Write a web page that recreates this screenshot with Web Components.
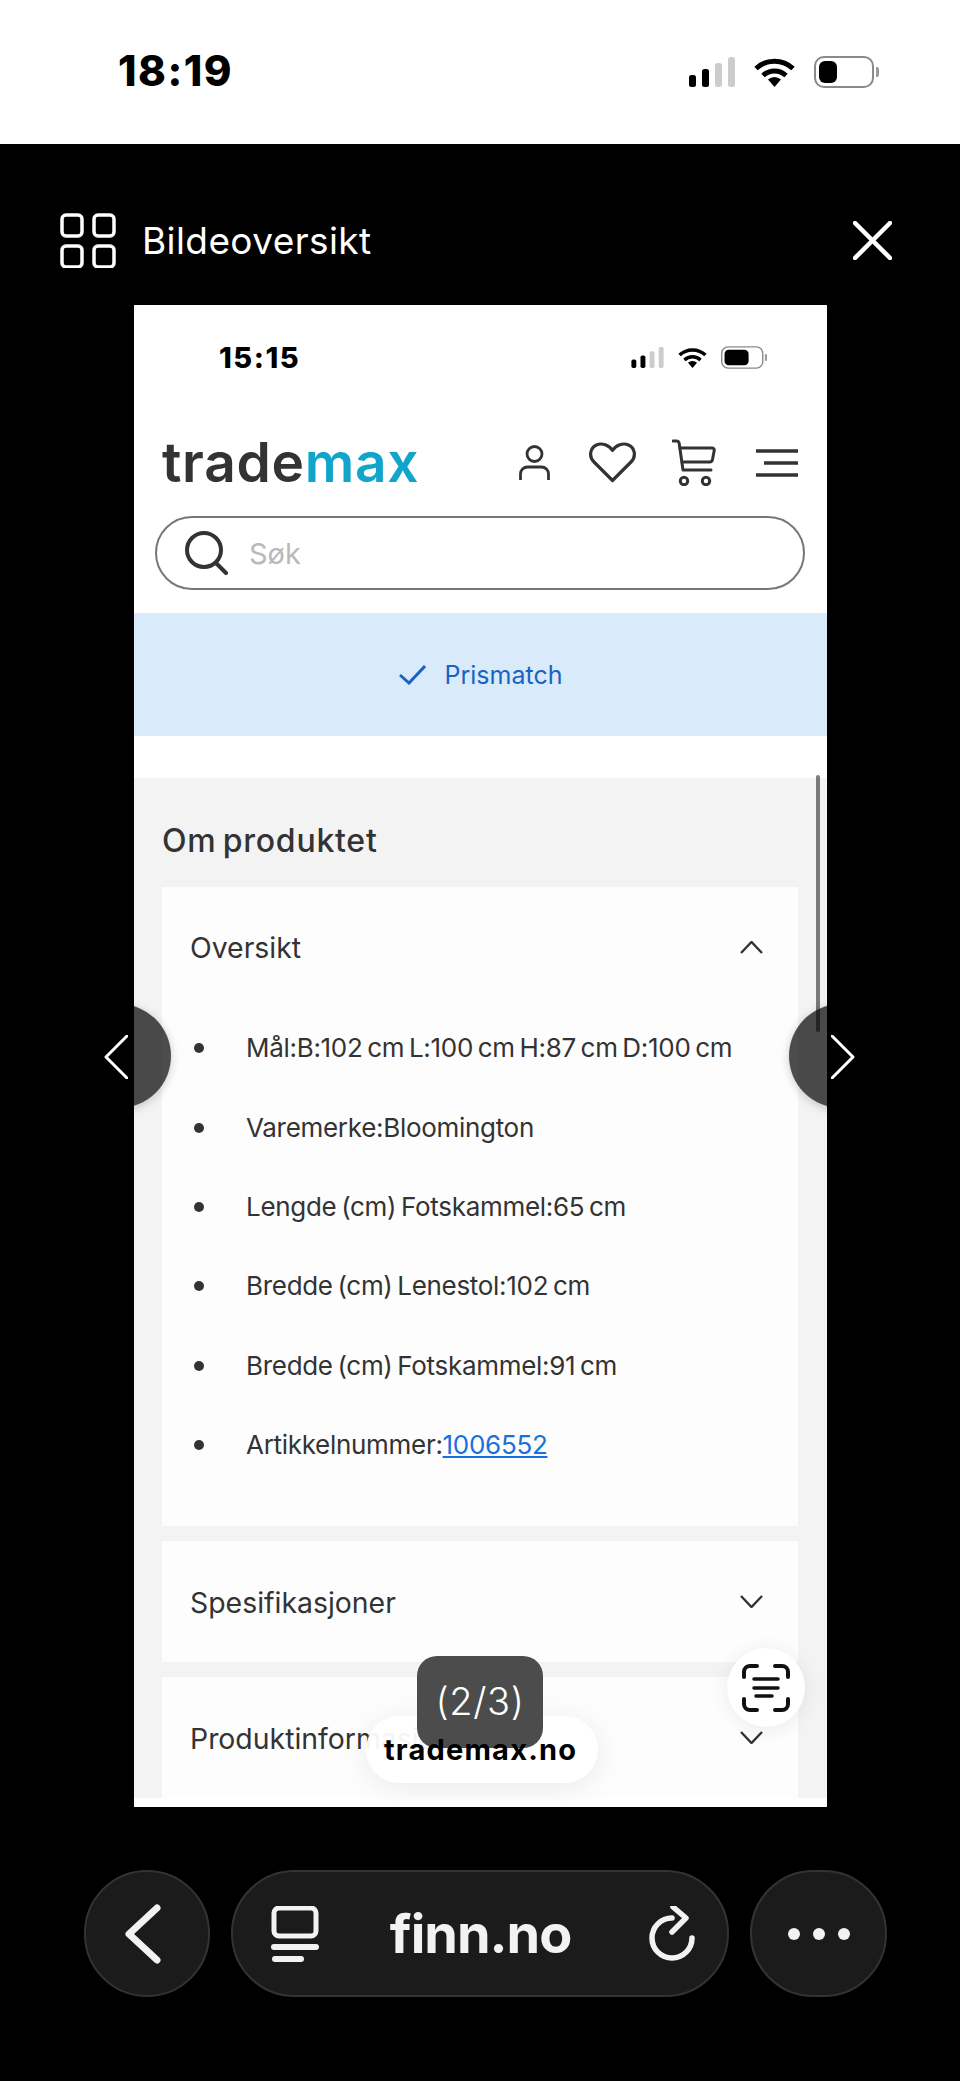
<!DOCTYPE html>
<html lang="no">
<head>
<meta charset="utf-8">
<title>Bildeoversikt</title>
<style>
  html, body { margin: 0; background: #000; }
  body { width: 960px; height: 2081px; overflow: hidden; position: relative; font-family: Inter, "Liberation Sans", sans-serif; }
</style>
</head>
<body>
<phone-status></phone-status>
<viewer-header>Bildeoversikt</viewer-header>

<shot-frame>
  <inner-status></inner-status>
  <shop-header></shop-header>
  <search-box>Søk</search-box>
  <info-band>Prismatch</info-band>
  <product-section heading="Om produktet">
    <accordion-card heading="Oversikt" open>
      <spec-item>Mål:B:102 cm L:100 cm H:87 cm D:100 cm</spec-item>
      <spec-item>Varemerke:Bloomington</spec-item>
      <spec-item>Lengde (cm) Fotskammel:65 cm</spec-item>
      <spec-item>Bredde (cm) Lenestol:102 cm</spec-item>
      <spec-item>Bredde (cm) Fotskammel:91 cm</spec-item>
      <spec-item>Artikkelnummer:<a href="#1006552">1006552</a></spec-item>
    </accordion-card>
    <accordion-card heading="Spesifikasjoner"></accordion-card>
    <accordion-card heading="Produktinformasjon"></accordion-card>
  </product-section>
</shot-frame>

<viewer-arrow side="left"></viewer-arrow>
<viewer-arrow side="right"></viewer-arrow>
<source-pill></source-pill>
<page-toast>(2/3)</page-toast>
<source-label>trademax.no</source-label>
<scan-button></scan-button>
<bottom-bar>finn.no</bottom-bar>

<script>
// small helper, every element is the same: open shadow root + html string
class Base extends HTMLElement {
  connectedCallback() {
    if (!this.shadowRoot) this.attachShadow({ mode: 'open' });
    this.shadowRoot.innerHTML = this.render();
  }
}

function signalIcon(w, h) {
  return `<svg width="${w}" height="${h}" viewBox="0 0 46 30">
    <rect x="0" y="18" width="7" height="12" rx="2.5" fill="#000"/>
    <rect x="13" y="12" width="7" height="18" rx="2.5" fill="#000"/>
    <rect x="26" y="6" width="7" height="24" rx="2.5" fill="#ccc"/>
    <rect x="39" y="0" width="7" height="30" rx="2.5" fill="#ccc"/>
  </svg>`;
}

function wifiIcon(w, h) {
  return `<svg width="${w}" height="${h}" viewBox="0 0 41 30" fill="none" stroke="#000" stroke-width="5">
    <path d="M2 11.5a27 27 0 0 1 37 0"/>
    <path d="M9 18.5a17 17 0 0 1 23 0"/>
    <path d="M14 22.5a9.500 9.500 0 0 1 13 0L20.500 30z" fill="#000" stroke="none"/>
  </svg>`;
}

function batteryIcon(w, h, fillW, rx) {
  return `<svg width="${w}" height="${h}" viewBox="0 0 65 32" fill="none">
    <rect x="1" y="1" width="58" height="30" rx="${rx}" stroke="#8a8a8a" stroke-width="2"/>
    <rect x="5" y="5" width="${fillW}" height="22" rx="${rx - 3}" fill="#000"/>
    <path d="M62 11a5 5 0 0 1 0 10z" fill="#999"/>
  </svg>`;
}

customElements.define('phone-status', class extends Base {
  render() {
    return `<style>
      :host { display: flex; align-items: center; height: 144px; background: #fff; padding: 0 81px 0 118px; box-sizing: border-box; }
      .time { font: 800 42px/1 Inter, "Liberation Sans", sans-serif; color: #000; letter-spacing: 1.5px; margin-right: auto; position: relative; top: -1px; }
      .icons { display: flex; align-items: center; gap: 19px; margin-top: -1px; }
    </style>
    <span class="time">18:19</span>
    <span class="icons">${signalIcon(46, 30)}${wifiIcon(41, 30)}${batteryIcon(65, 32, 18, 9)}</span>`;
  }
});

customElements.define('viewer-header', class extends Base {
  render() {
    return `<style>
      :host { display: flex; align-items: center; height: 161px; padding: 32px 68px 0 60px; box-sizing: border-box; color: #fff; }
      .title { font: 400 37px/1 Inter, "Liberation Sans", sans-serif; letter-spacing: .4px; margin-left: 26px; margin-right: auto; }
    </style>
    <svg width="56" height="55" viewBox="0 0 56 55" fill="none" stroke="#fff" stroke-width="3.500">
      <rect x="2" y="2" width="20" height="21" rx="4"/><rect x="34" y="2" width="20" height="21" rx="4"/>
      <rect x="2" y="33" width="20" height="21" rx="4"/><rect x="34" y="33" width="20" height="21" rx="4"/>
    </svg>
    <span class="title"><slot></slot></span>
    <svg width="39" height="39" viewBox="0 0 39 39" stroke="#fff" stroke-width="4.500" stroke-linecap="round">
      <path d="M2 2l35 35M37 2L2 37"/>
    </svg>`;
  }
});

customElements.define('shot-frame', class extends Base {
  render() {
    return `<style>
      :host { display: block; width: 693px; height: 1502px; margin-left: 134px; background: #fff; overflow: hidden; position: relative; }
      .thumb { position: absolute; right: 7px; top: 470px; width: 4px; height: 257px; border-radius: 2px; background: rgba(0,0,0,.5); }
    </style>
    <slot></slot><div class="thumb"></div>`;
  }
});

customElements.define('inner-status', class extends Base {
  render() {
    return `<style>
      :host { display: flex; align-items: center; height: 104px; padding: 0 60px 0 85px; box-sizing: border-box; }
      .time { font: 800 29px/1 Inter, "Liberation Sans", sans-serif; color: #000; letter-spacing: 1.5px; margin-right: auto; }
      .icons { display: flex; align-items: center; gap: 14px; }
    </style>
    <span class="time">15:15</span>
    <span class="icons">${signalIcon(33, 21)}${wifiIcon(29, 21)}${batteryIcon(46, 23, 34, 9)}</span>`;
  }
});

customElements.define('shop-header', class extends Base {
  render() {
    return `<style>
      :host { display: flex; align-items: center; height: 107px; padding: 0 29px 0 28px; box-sizing: border-box; }
      .logo { font: 600 55px/1 Inter, "Liberation Sans", sans-serif; color: #333; letter-spacing: .7px; margin-right: auto; }
      .logo b { font-weight: 600; color: #12a5cb; }
      svg { display: block; fill: none; stroke: #333; }
    </style>
    <span class="logo">trade<b>max</b></span>
    <svg width="31" height="36" viewBox="0 0 31 36" stroke-width="2.800">
      <circle cx="15.500" cy="9" r="7.500"/>
      <path d="M1.500 35v-6a7 7 0 0 1 7-7h14a7 7 0 0 1 7 7v6"/>
    </svg>
    <svg width="47" height="41" viewBox="0 0 47 41" stroke-width="3.200" stroke-linejoin="round" style="margin-left:39px">
      <path d="M23.500 38.500L5 20C-.5 14.500 1 6 7.500 3 13 .5 20 3 23.500 8.500 27 3 34 .5 39.500 3 46 6 47.500 14.500 42 20z"/>
    </svg>
    <svg width="44" height="47" viewBox="0 0 44 47" stroke-width="3" stroke-linecap="round" stroke-linejoin="round" style="margin-left:36px">
      <path d="M1 2h3.500c1.500 0 2.500 1 2.700 2.500L11 31h28"/>
      <path d="M8 9h32c1.500 0 2.500 1 2.200 2.500l-1.700 9c-.3 1.500-1.200 2.500-2.700 2.500H10"/>
      <circle cx="12" cy="42" r="3.700"/><circle cx="34" cy="42" r="3.700"/>
    </svg>
    <svg width="42" height="28" viewBox="0 0 42 28" stroke-width="3.600" style="margin-left:40px">
      <path d="M0 2h42M8 14h34M0 26h42"/>
    </svg>`;
  }
});

customElements.define('search-box', class extends Base {
  render() {
    return `<style>
      :host { display: flex; align-items: center; height: 74px; margin: 0 22px 23px 21px; padding-left: 28px; box-sizing: border-box; border: 2px solid #777; border-radius: 37px; }
      span { font: 400 29px/1 Inter, "Liberation Sans", sans-serif; color: #b9b9b9; margin-left: 21px; }
    </style>
    <svg width="43" height="44" viewBox="0 0 43 44" fill="none" stroke="#333" stroke-width="4" stroke-linecap="round">
      <circle cx="19" cy="19" r="17"/><path d="M31 32l10 10"/>
    </svg>
    <span><slot></slot></span>`;
  }
});

customElements.define('info-band', class extends Base {
  render() {
    return `<style>
      :host { display: flex; align-items: center; justify-content: center; gap: 19px; height: 123px; margin-bottom: 42px; background: #d9eafa; color: #1a63c2; font: 400 25px/1 Inter, "Liberation Sans", sans-serif; }
      span { position: relative; top: 1px; }
    </style>
    <svg width="27" height="20" viewBox="0 0 27 20" fill="none" stroke="#1a63c2" stroke-width="3">
      <path d="M1 10l9 8L26 1"/>
    </svg>
    <span><slot></slot></span>`;
  }
});

customElements.define('product-section', class extends Base {
  render() {
    return `<style>
      :host { display: block; background: #f3f3f3; padding: 43px 29px 0 28px; }
      h2 { margin: 0 0 26px; font: 500 32px/40px Inter, "Liberation Sans", sans-serif; color: #333; letter-spacing: .75px; word-spacing: -3px; }
      .cards { display: flex; flex-direction: column; gap: 15px; }
    </style>
    <h2>${this.getAttribute('heading')}</h2>
    <div class="cards"><slot></slot></div>`;
  }
});

customElements.define('accordion-card', class extends Base {
  render() {
    const open = this.hasAttribute('open');
    const chev = open ? 'M1 12L11.500 1 22 12' : 'M1 1l10.500 11L22 1';
    return `<style>
      :host { display: block; background: #fdfdfd; padding-bottom: ${open ? 42 : 0}px; }
      .head { display: flex; align-items: center; justify-content: space-between; height: 121px; padding: 0 35px 0 28px; box-sizing: border-box; font: 400 28.400px/1 Inter, "Liberation Sans", sans-serif; color: #333; }
      .head span { position: relative; top: 1px; }
      svg { display: block; }
    </style>
    <div class="head"><span>${this.getAttribute('heading')}</span>
      <svg width="23" height="13" viewBox="0 0 23 13" fill="none" stroke="#333" stroke-width="2.400"><path d="${chev}"/></svg>
    </div>
    <slot></slot>`;
  }
});

customElements.define('spec-item', class extends Base {
  render() {
    return `<style>
      :host { display: flex; align-items: center; height: 79.400px; padding: 1px 0 0 32px; box-sizing: border-box; font: 400 26px/1 Inter, "Liberation Sans", sans-serif; color: #333; letter-spacing: -.3px; word-spacing: -2.300px; }
      i { flex: none; width: 10px; height: 10px; border-radius: 50%; background: #333; margin-right: 42px; }
      ::slotted(a) { color: #1a6fe0; text-decoration: underline; }
    </style>
    <i></i><span><slot></slot></span>`;
  }
});

customElements.define('viewer-arrow', class extends Base {
  render() {
    const left = this.getAttribute('side') === 'left';
    return `<style>
      :host { position: absolute; top: 1004px; left: ${left ? 67 : 789}px; width: 104px; height: 104px; border-radius: 50%; background: rgba(0,0,0,.7); box-shadow: 0 2px 10px rgba(0,0,0,.2); }
      svg { position: absolute; top: 31px; left: ${left ? 37 : 42}px; }
    </style>
    <svg width="24" height="44" viewBox="0 0 24 44" fill="none" stroke="#fff" stroke-width="3" stroke-linecap="round" stroke-linejoin="round">
      <path d="${left ? 'M23 1L2 22l21 21' : 'M1 1l21 21L1 43'}"/>
    </svg>`;
  }
});

customElements.define('source-pill', class extends Base {
  render() {
    return `<style>
      :host { position: absolute; left: 366px; top: 1716px; width: 232px; height: 67px; border-radius: 34px; background: rgba(255,255,255,.95); box-shadow: 0 4px 30px rgba(0,0,0,.08); }
    </style>`;
  }
});

customElements.define('page-toast', class extends Base {
  render() {
    return `<style>
      :host { position: absolute; left: 417px; top: 1656px; width: 126px; height: 92px; border-radius: 20px; background: #4c4c4c; color: #fff; display: flex; align-items: center; justify-content: center; font: 300 38px/1 Inter, "Liberation Sans", sans-serif; letter-spacing: .6px; padding-bottom: 2px; box-sizing: border-box; }
    </style><slot></slot>`;
  }
});

customElements.define('source-label', class extends Base {
  render() {
    return `<style>
      :host { position: absolute; left: 384px; top: 1732px; font: 700 29px/36px Inter, "Liberation Sans", sans-serif; letter-spacing: 1.200px; color: #000; }
    </style><slot></slot>`;
  }
});

customElements.define('scan-button', class extends Base {
  render() {
    return `<style>
      :host { position: absolute; left: 727px; top: 1648px; width: 78px; height: 79px; border-radius: 50%; background: #fff; box-shadow: 0 2px 20px rgba(0,0,0,.08); display: flex; align-items: center; justify-content: center; }
    </style>
    <svg width="48" height="48" viewBox="0 0 48 48" fill="none" stroke="#111" stroke-width="4" stroke-linecap="round">
      <path d="M2 13V8a6 6 0 0 1 6-6h7M33 2h7a6 6 0 0 1 6 6v5M2 35v5a6 6 0 0 0 6 6h7M33 46h7a6 6 0 0 0 6-6v-5"/>
      <path d="M12 15h24M12 24h24M14 32h16" stroke-width="3.500"/>
    </svg>`;
  }
});

customElements.define('bottom-bar', class extends Base {
  render() {
    return `<style>
      :host { position: absolute; left: 84px; top: 1870px; width: 803px; height: 127px; display: flex; gap: 21px; color: #f2f2f2; }
      .btn { box-sizing: border-box; height: 127px; background: #1b1b1b; border: 2px solid #333; border-radius: 64px; display: flex; align-items: center; }
      .back { width: 126px; justify-content: center; padding-right: 8px; }
      .url { width: 498px; padding: 0 32px 0 38px; justify-content: space-between; }
      .more { width: 137px; justify-content: center; gap: 13px; }
      .more i { width: 12px; height: 12px; border-radius: 50%; background: #f2f2f2; }
      .name { font: 700 54px/1 Inter, "Liberation Sans", sans-serif; letter-spacing: -1px; margin-right: 7px; }
    </style>
    <div class="btn back">
      <svg width="36" height="60" viewBox="0 0 36 60" fill="none" stroke="#f2f2f2" stroke-width="7" stroke-linecap="round" stroke-linejoin="round"><path d="M32 4L4 30l28 26"/></svg>
    </div>
    <div class="btn url">
      <svg width="48" height="56" viewBox="0 0 48 56" fill="#f2f2f2">
        <rect x="3" y="2" width="42" height="28" rx="5" fill="none" stroke="#f2f2f2" stroke-width="5"/>
        <rect x="0" y="38" width="48" height="6" rx="3"/><rect x="1" y="50" width="32" height="6" rx="3"/>
      </svg>
      <span class="name"><slot></slot></span>
      <svg width="46" height="56" viewBox="0 0 46 56" fill="none" stroke="#f2f2f2" stroke-width="5.500" stroke-linecap="round" stroke-linejoin="round">
        <path d="M23 12A20 20 0 1 0 43 32"/><path d="M24 1l13 11-14 14"/>
      </svg>
    </div>
    <div class="btn more"><i></i><i></i><i></i></div>`;
  }
});
</script>
</body>
</html>
